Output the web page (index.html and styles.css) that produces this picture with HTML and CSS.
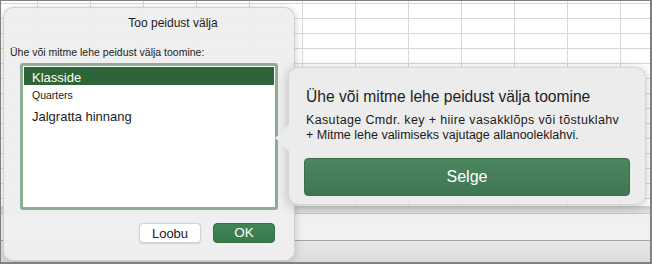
FILE: index.html
```html
<!DOCTYPE html>
<html lang="et">
<head>
<meta charset="utf-8">
<title>Too peidust välja</title>
<link rel="stylesheet" href="styles.css">
</head>
<body>
<div class="screen">
  <div class="sheet"></div>
  <div class="bar"><div class="tabs"></div></div>

  <div class="dialog">
    <div class="dialog-title">Too peidust välja</div>
    <div class="dialog-label">Ühe või mitme lehe peidust välja toomine:</div>
    <div class="list">
      <div class="item item-sel">Klasside</div>
      <div class="item item-small">Quarters</div>
      <div class="item item-third">Jalgratta hinnang</div>
    </div>
    <div class="actions">
      <button class="btn btn-cancel">Loobu</button>
      <button class="btn btn-ok">OK</button>
    </div>
  </div>

  <div class="tip">
    <div class="tip-title">Ühe või mitme lehe peidust välja toomine</div>
    <div class="tip-body"><span class="tip-line-wide">Kasutage Cmdr. key + hiire vasakklõps või tõstuklahv</span><br>+ Mitme lehe valimiseks vajutage allanooleklahvi.</div>
    <button class="tip-btn">Selge</button>
  </div>
</div>
</body>
</html>
```
FILE: styles.css
```css
html, body {
  margin: 0;
  padding: 0;
  background: #ffffff;
}

.screen {
  position: relative;
  width: 652px;
  height: 264px;
  box-sizing: border-box;
  border: 1px solid #808080;
  border-right-width: 2px;
  border-bottom-width: 2px;
  display: flex;
  flex-direction: column;
  overflow: hidden;
  font-family: "Liberation Sans", Arial, sans-serif;
  color: #1c1c1c;
}

.sheet {
  flex: 1;
  background-color: #ffffff;
  background-image:
    linear-gradient(to bottom, #d8d8d8 1px, transparent 1px),
    linear-gradient(to right, #d8d8d8 1px, transparent 1px);
  background-size: 100% 15px, 53px 100%;
  background-position: 0 2px, 89px 0;
}

.bar {
  flex: none;
  height: 56px;
  box-sizing: border-box;
  padding-top: 7px;
  background: linear-gradient(to bottom, #cfcfcf 0, #e4e4e4 7px, #e7e7e7 36px, #dcdcdc 100%);
}

.tabs {
  height: 26px;
  border-top: 1px solid #c8c8c8;
  border-bottom: 1px solid #a4a4a4;
  background: #f1f1f1;
}

/* Dialog */
.dialog {
  position: absolute;
  left: 2px;
  top: 6px;
  width: 292px;
  height: 254px;
  box-sizing: border-box;
  border: 1px solid rgba(0, 0, 0, 0.13);
  border-radius: 10px;
  background: rgba(238, 238, 239, 0.97);
  box-shadow: 0 2px 10px rgba(0, 0, 0, 0.18);
  display: flex;
  flex-direction: column;
}

.dialog-title {
  padding-top: 7px;
  padding-left: 48px;
  font-size: 12px;
  line-height: 16px;
  text-align: center;
}

.dialog-label {
  margin-top: 15px;
  padding-left: 6px;
  font-size: 10.5px;
  line-height: 13px;
}

.list {
  margin-top: 4px;
  margin-left: 16px;
  width: 258px;
  height: 147px;
  box-sizing: border-box;
  border: 3px solid #8dac92;
  border-radius: 3px;
  padding: 1px;
  background: #ffffff;
}

.item {
  padding-left: 8px;
  white-space: nowrap;
}

.item-sel {
  height: 14px;
  padding-top: 4px;
  line-height: 14px;
  font-size: 13px;
  background: #2d6438;
  color: #ffffff;
}

.item-small {
  height: 17px;
  padding-top: 2px;
  line-height: 17px;
  font-size: 10.5px;
}

.item-third {
  height: 18px;
  padding-top: 4px;
  line-height: 18px;
  font-size: 13px;
}

.actions {
  margin-top: 13px;
  padding-right: 19px;
  display: flex;
  justify-content: flex-end;
  gap: 12px;
}

.btn {
  width: 62px;
  height: 20px;
  box-sizing: border-box;
  padding: 0;
  border-radius: 4px;
  font-family: "Liberation Sans", Arial, sans-serif;
  font-size: 13px;
  line-height: 18px;
}

.btn-cancel {
  padding-top: 1px;
  background: #ffffff;
  border: 1px solid #d2d2d2;
  color: #1c1c1c;
  box-shadow: 0 0.5px 1px rgba(0, 0, 0, 0.12);
}

.btn-ok {
  background: linear-gradient(to bottom, #428559, #377a4c);
  border: 1px solid #336e45;
  color: #ffffff;
  font-size: 13.5px;
}

/* Teaching callout */
.tip {
  position: absolute;
  left: 287px;
  top: 66px;
  width: 358px;
  height: 138px;
  box-sizing: border-box;
  border: 1px solid rgba(0, 0, 0, 0.09);
  border-radius: 10px;
  background: #ececec;
  box-shadow: 0 2px 12px rgba(0, 0, 0, 0.22);
  display: flex;
  flex-direction: column;
}

.tip::before {
  content: "";
  position: absolute;
  left: -14px;
  top: 57px;
  width: 14px;
  height: 26px;
  background: #ececec;
  clip-path: polygon(100% 0, 0 50%, 100% 100%);
}

.tip-title {
  padding-top: 19px;
  padding-left: 17px;
  font-size: 15.6px;
  line-height: 19px;
  color: #1e1e1e;
  white-space: nowrap;
}

.tip-body {
  margin-top: 7px;
  padding-left: 17px;
  font-size: 12.5px;
  line-height: 15px;
  color: #1a1a1a;
  white-space: nowrap;
}

.tip-line-wide {
  letter-spacing: 0.35px;
}

.tip-btn {
  margin: 15px 15px 0 15px;
  height: 38px;
  box-sizing: border-box;
  padding: 0;
  border: 1px solid #3a6e49;
  border-radius: 4px;
  background: linear-gradient(to bottom, #4c8760, #3e7651);
  color: #ffffff;
  font-family: "Liberation Sans", Arial, sans-serif;
  font-size: 16px;
}
```
